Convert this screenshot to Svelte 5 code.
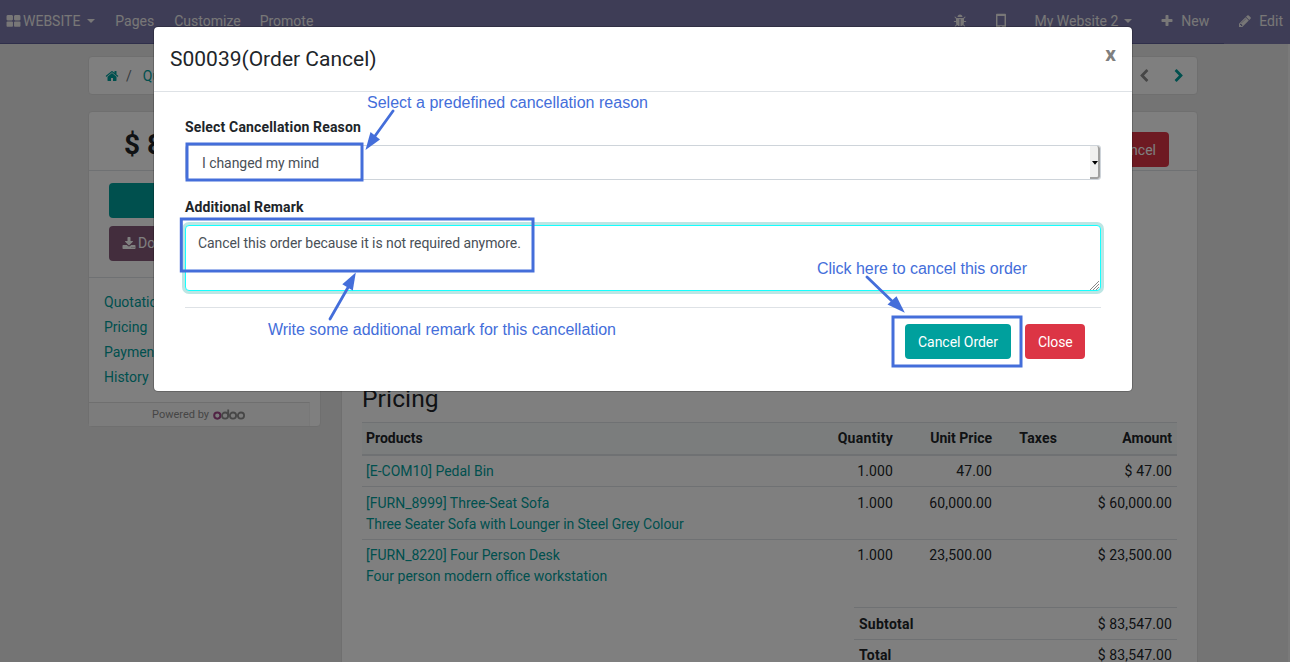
<script>
  const icons = {
    grid: 'M832 1024v384q0 52-38 90t-90 38h-512q-52 0-90-38t-38-90v-384q0-52 38-90t90-38h512q52 0 90 38t38 90zm0-768v384q0 52-38 90t-90 38h-512q-52 0-90-38t-38-90v-384q0-52 38-90t90-38h512q52 0 90 38t38 90zm896 768v384q0 52-38 90t-90 38h-512q-52 0-90-38t-38-90v-384q0-52 38-90t90-38h512q52 0 90 38t38 90zm0-768v384q0 52-38 90t-90 38h-512q-52 0-90-38t-38-90v-384q0-52 38-90t90-38h512q52 0 90 38t38 90z',
    bug: 'M1696 960q0 26-19 45t-45 19h-224q0 171-67 290l208 209q19 19 19 45t-19 45q-18 19-45 19t-45-19l-198-197q-5 5-15 13t-42 28.5-65 36.5-82 29-97 13v-896h-128v896q-51 0-101.5-13.5t-87-33-66-39-43.5-32.5l-15-14-183 207q-20 21-48 21-24 0-43-16-19-18-20.5-44.5t15.5-46.5l202-227q-58-114-58-274h-224q-26 0-45-19t-19-45 19-45 45-19h224v-294l-173-173q-19-19-19-45t19-45 45-19 45 19l173 173h844l173-173q19-19 45-19t45 19 19 45-19 45l-173 173v294h224q26 0 45 19t19 45zm-480-576h-640q0-133 93.5-226.5t226.5-93.5 226.5 93.5 93.5 226.5z',
    mobile: 'M430 90q-94 0-94 96v1500q0 96 94 96h932q94 0 94-96v-1500q0-96-94-96zM500 330h792v1040h-792zM800 1480h192v150h-192z',
    plus: 'M1600 736v192q0 40-28 68t-68 28h-416v416q0 40-28 68t-68 28h-192q-40 0-68-28t-28-68v-416h-416q-40 0-68-28t-28-68v-192q0-40 28-68t68-28h416v-416q0-40 28-68t68-28h192q40 0 68 28t28 68v416h416q40 0 68 28t28 68z',
    pencil: 'M491 1536l91-91-235-235-91 91v107h128v128h107zm523-928q0-22-22-22-10 0-17 7l-542 542q-7 7-7 17 0 22 22 22 10 0 17-7l542-542q7-7 7-17zm-54-192l416 416-832 832h-416v-416zm683 96q0 53-37 90l-166 166-416-416 166-165q36-38 90-38 53 0 91 38l235 234q37 39 37 91z',
    home: 'M1472 992v480q0 26-19 45t-45 19h-384v-384h-256v384h-384q-26 0-45-19t-19-45v-480q0-1 .5-3t.5-3l575-474 575 474q1 2 1 6zm223-69l-62 74q-8 9-21 11h-3q-13 0-21-7l-692-577-692 577q-12 8-24 7-13-2-21-11l-62-74q-8-10-7-23.5t11-21.5l719-599q32-26 76-26t76 26l244 204v-195q0-14 9-23t23-9h192q14 0 23 9t9 23v408l219 182q10 8 11 21.5t-7 23.5z',
    download: 'M1344 1344q0-26-19-45t-45-19-45 19-19 45 19 45 45 19 45-19 19-45zm256 0q0-26-19-45t-45-19-45 19-19 45 19 45 45 19 45-19 19-45zm128-224v320q0 40-28 68t-68 28h-1472q-40 0-68-28t-28-68v-320q0-40 28-68t68-28h465l135 136q58 56 136 56t136-56l136-136h464q40 0 68 28t28 68zm-325-569q17 41-14 70l-448 448q-18 19-45 19t-45-19l-448-448q-31-29-14-70 17-39 59-39h256v-448q0-26 19-45t45-19h256q26 0 45 19t19 45v448h256q42 0 59 39z',
    right: 'M1363 877l-742 742q-19 19-45 19t-45-19l-166-166q-19-19-19-45t19-45l531-531-531-531q-19-19-19-45t19-45l166-166q19-19 45-19t45 19l742 742q19 19 19 45t-19 45z'
  };
  const rows = [
    { name: '[E-COM10] Pedal Bin', desc: '', qty: '1.000', price: '47.00', amount: '$ 47.00' },
    { name: '[FURN_8999] Three-Seat Sofa', desc: 'Three Seater Sofa with Lounger in Steel Grey Colour', qty: '1.000', price: '60,000.00', amount: '$ 60,000.00' },
    { name: '[FURN_8220] Four Person Desk', desc: 'Four person modern office workstation', qty: '1.000', price: '23,500.00', amount: '$ 23,500.00' }
  ];
  const sections = ['Quotation', 'Pricing', 'Payment', 'History'];
  let remark = $state('Cancel this order because it is not required anymore.');
</script>

{#snippet icon(name, size = 14)}
  <svg class="icon {name}" width={size} height={size} viewBox="0 0 1792 1792" aria-hidden="true"><path fill-rule="evenodd" d={icons[name]} /></svg>
{/snippet}

<div class="screen">
  <nav>
    <div class="left">
      <span class="brand">{@render icon('grid', 15)}<span>WEBSITE</span><i class="caret"></i></span>
      <span class="pages">Pages</span><span class="customize">Customize</span><span>Promote</span>
    </div>
    <div class="right">
      <span class="bugitem">{@render icon('bug')}</span>
      <span class="mobitem">{@render icon('mobile', 16)}</span>
      <span class="site">My Website 2<i class="caret"></i></span>
      <span class="new">{@render icon('plus')}New</span>
      <span class="edit">{@render icon('pencil')}Edit</span>
    </div>
  </nav>
  <main>
    <div class="crumbs card">
      <span class="trail">{@render icon('home')}<em>/</em><a href="#q">Quotations</a></span>
      <span class="pager"><span class="prev">{@render icon('right')}</span>{@render icon('right')}</span>
    </div>
    <div class="cols">
      <aside class="card">
        <div class="total">$ 83,547.00</div>
        <div class="actions">
          <div class="btn teal"></div>
          <div class="btn purple">{@render icon('download')}Download</div>
        </div>
        <div class="links">
          {#each sections as s}<a href="#{s}">{s}</a>{/each}
        </div>
        <div class="powered">
          <span>Powered by</span>
          <svg width="33" height="13" viewBox="0 0 33 13" fill="none" stroke="#8f8f8f" stroke-width="1.8" role="img" aria-label="odoo">
            <circle cx="4.3" cy="7.6" r="3.1" stroke="#a24689" stroke-width="2" /><circle cx="12.1" cy="7.6" r="3.1" /><path d="M15.2 7.6V1.5" /><circle cx="20" cy="7.6" r="3.1" /><circle cx="28" cy="7.6" r="3.1" />
          </svg>
        </div>
      </aside>
      <section class="card order">
        <header><span class="btn red">Cancel</span></header>
        <div class="content">
          <h2>Pricing</h2>
          <div class="row head"><span>Products</span><span class="q">Quantity</span><span>Unit Price</span><span class="taxes">Taxes</span><span>Amount</span></div>
          {#each rows as r}
            <div class="row" class:tall={r.desc}>
              <a href="#product">{r.name}{#if r.desc}<br /><span class="desc">{r.desc}</span>{/if}</a><span class="num">{r.qty}</span><span class="num">{r.price}</span><span></span><span class="num">{r.amount}</span>
            </div>
          {/each}
          <div class="totals">
            <div><b>Subtotal</b><span class="num">$ 83,547.00</span></div>
            <div><b>Total</b><span class="num">$ 83,547.00</span></div>
          </div>
        </div>
      </section>
    </div>
  </main>

  <div class="backdrop">
    <div class="modal" role="dialog" aria-label="Order Cancel">
      <div class="mhead"><h4>S00039(Order Cancel)</h4><b class="x">x</b></div>
      <div class="mbody">
        <b class="label">Select Cancellation Reason</b>
        <div class="select"><span>I changed my mind</span><div class="arrow"><svg width="6" height="4" viewBox="0 0 6 4"><path d="M0 0h6L3 3.8z" /></svg></div></div>
        <b class="label second">Additional Remark</b>
        <div class="field">
          <textarea bind:value={remark} spellcheck="false"></textarea>
          <svg class="grip" width="9" height="9" viewBox="0 0 9 9" stroke="#888" stroke-width="1"><path d="M0 9L9 0M3 9L9 3M6 9L9 6" /></svg>
        </div>
        <div class="mfoot"><span class="btn teal confirm">Cancel Order</span><span class="btn red close">Close</span></div>
      </div>
    </div>
  </div>

  <svg class="notes" width="1290" height="662" viewBox="0 0 1290 662">
    <g fill="none" stroke="#446eda" stroke-width="3">
      <rect x="187" y="144" width="175" height="36" />
      <rect x="181.3" y="219" width="351.7" height="52" />
      <rect x="893" y="317" width="128" height="49" />
    </g>
    <g stroke="#446eda" stroke-width="2.8" stroke-linecap="round">
      <path d="M393 111L375 136M330 319L350 284M867 277L894 303" />
    </g>
    <g fill="#446eda">
      <path d="M365.5 150L370.5 132L380 139.5z" /><path d="M355.8 272.5L352.8 290.5L342.3 284.3z" /><path d="M904.8 312.8L887.5 304.5L896.5 296.3z" />
    </g>
    <g fill="#446eda" class="notetext">
      <text x="367" y="108" textLength="281">Select a predefined cancellation reason</text>
      <text x="268" y="335" textLength="348">Write some additional remark for this cancellation</text>
      <text x="817" y="274" textLength="210">Click here to cancel this order</text>
    </g>
  </svg>
</div>

<style>
  :global(body) { margin: 0; overflow: hidden; }
  * { box-sizing: border-box; }
  .screen { position: relative; width: 1290px; height: 662px; overflow: hidden; background: linear-gradient(to right, #e9e9e9 1288px, #f5f5f5 1288px); font: 14px/21px Roboto, sans-serif; color: #212529; }
  a { color: #00a09d; text-decoration: none; }
  .icon { fill: currentColor; flex: none; }
  nav { height: 44px; background: linear-gradient(#5f5e97, #5f5e97) 0 100% / 1224px 1px no-repeat #7c7bad; display: flex; justify-content: space-between; padding: 0 7px 2px 6px; color: #f0eeee; }
  nav > div, nav span { display: flex; align-items: center; white-space: nowrap; }
  .caret { border: 4px solid transparent; border-top-color: currentColor; border-bottom: 0; margin-left: 6px; }
  .brand { gap: 2px; margin-right: 20px; }
  .brand .caret { margin-left: 5px; }
  .pages { margin-right: 20px; }
  .customize { margin-right: 19px; }
  .bugitem { margin-right: 26px; }
  .mobitem { margin-right: 26px; }
  .site { margin-right: 28px; }
  .new { margin-right: 29px; gap: 7px; }
  .edit { gap: 7px; }
  main { width: 1110px; margin: 12px 0 0 88px; }
  .card { background: #fff; border: 1px solid #dedede; border-radius: 4px; }
  .crumbs { height: 39px; display: flex; justify-content: space-between; align-items: center; padding: 0 11px 0 16px; }
  .crumbs span { display: flex; align-items: center; }
  .crumbs .trail { padding-top: 1px; }
  .trail .home { color: #00a09d; }
  .icon.right { color: #00a09d; }
  .trail em { font-style: normal; margin: 0 11px 0 7px; color: #6c757d; }
  .pager { gap: 21px; }
  .prev { transform: scaleX(-1); }
  .prev .icon { color: #8d8d8d; }
  .cols { display: flex; gap: 20px; margin-top: 16px; }
  aside { width: 233px; height: 316px; display: flex; flex-direction: column; }
  .total { height: 59px; border-bottom: 1px solid #dee2e6; font-weight: 700; font-size: 28px; line-height: 65px; padding-left: 35px; }
  .btn { height: 35px; border-radius: 4px; color: #fff; display: flex; align-items: center; padding: 0 13px; white-space: nowrap; }
  .teal { background: #00a09d; }
  .purple { background: #875a7b; gap: 2px; overflow: hidden; }
  .red { background: #dc3545; }
  .actions { height: 107px; padding: 12px 20px 0; display: flex; flex-direction: column; gap: 8px; border-bottom: 1px solid #dee2e6; }
  .links { height: 124px; padding: 12px 15px; display: flex; flex-direction: column; }
  .links a { line-height: 25px; }
  .powered { width: 221px; height: 24px; background: #f8f8f8; border-top: 1px solid #dedede; border-right: 1px solid #f0f0f0; display: flex; align-items: center; justify-content: center; gap: 4px; font-size: 11px; color: #8d8d8d; }
  .order { flex: 1; height: 600px; }
  .order header { height: 59px; border-bottom: 1px solid #dee2e6; display: flex; justify-content: flex-end; padding: 20px 28px 0 0; }
  .order header .btn { padding-top: 2px; }
  .content { padding: 211px 20px 0 20px; }
  h2 { margin: 0; font-weight: 400; font-size: 24.6px; line-height: 34px; height: 40px; letter-spacing: .1px; }
  .row { display: grid; grid-template-columns: 1fr 100px 99px 65px 115px; height: 31px; padding: 5px 5px 0 4px; border-top: 1px solid #dee2e6; text-align: right; white-space: nowrap; }
  .row > :first-child { text-align: left; }
  .num { letter-spacing: .13px; }
  .desc { letter-spacing: -.06px; }
  .q { letter-spacing: .28px; }
  .taxes { letter-spacing: .15px; }
  .tall { height: 53px; padding-top: 6px; }
  .tall + .tall { height: 52px; padding-top: 5px; }
  .tall + .tall .desc { letter-spacing: 0; }
  .row.head { height: 34px; font-weight: 700; background: #f7fbfa; padding-top: 5px; border-bottom: 2px solid #dee2e6; }
  .row.head + .row { border-top: 0; height: 30px; padding-top: 5px; }
  .totals { width: 323px; margin: 16px 0 0 auto; }
  .totals b { letter-spacing: .25px; }
  .totals div { height: 32px; border-top: 1px solid #dee2e6; padding: 6px 5px 0; display: flex; justify-content: space-between; }
  .totals div + div { padding-top: 5px; }
  .backdrop { position: absolute; inset: 0; background: rgba(0, 0, 0, .5); }
  .modal { width: 980px; height: 366px; margin: 26px 0 0 153px; background: #fff; background-clip: padding-box; border: 1px solid rgba(0, 0, 0, .2); border-radius: 5px; }
  .mhead { height: 65px; border-bottom: 1px solid #dee2e6; display: flex; justify-content: space-between; padding: 16px 16px 0; }
  h4 { margin: 0; font-weight: 400; font-size: 21px; line-height: 32px; }
  .x { font-size: 21px; line-height: 22px; color: #7f7f7f; }
  .mbody { padding: 24px 31px 0; display: flex; flex-direction: column; }
  .label { height: 29px; padding-top: 1px; letter-spacing: .16px; }
  .second { margin-top: 16px; letter-spacing: .12px; }
  .select { height: 35px; border: 1px solid #ced4da; border-radius: 3px; display: flex; justify-content: space-between; align-items: center; padding-left: 16px; color: #495057; letter-spacing: -.05px; }
  .select > span { padding-top: 2px; }
  .arrow { width: 10px; height: 33px; background: #f0f0ef; border-right: 2px solid #a0a09f; border-bottom: 2px solid #a0a09f; display: flex; align-items: center; justify-content: flex-end; padding: 2px 0 0; border-radius: 0 3px 3px 0; }
  .arrow svg { flex: none; }
  .field { position: relative; width: 916px; height: 67px; }
  textarea { display: block; width: 916px; height: 66px; border: 1px solid #14ffff; border-radius: 4px; box-shadow: 0 0 0 3px #bce6e4; resize: none; outline: none; padding: 7px 12px; font: inherit; letter-spacing: -.07px; color: #495057; overflow: hidden; }
  .grip { position: absolute; right: 2px; bottom: 2px; }
  .mfoot { margin-top: 15px; border-top: 1px solid #dee2e6; padding: 16px 16px 0; display: flex; justify-content: flex-end; gap: 14px; letter-spacing: -.04px; }
  .mfoot .btn { padding-top: 2px; }
  .confirm { width: 106px; }
  .close { width: 60px; letter-spacing: -.12px; }
  .notes { position: absolute; inset: 0; pointer-events: none; }
  .notetext { font: 16px "Liberation Sans", Arial, sans-serif; }
</style>
